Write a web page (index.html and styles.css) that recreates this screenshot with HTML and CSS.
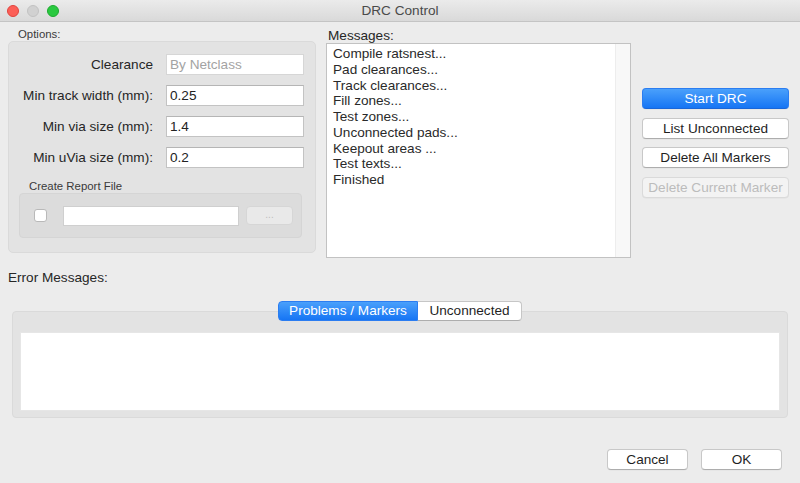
FILE: index.html
```html
<!DOCTYPE html>
<html>
<head>
<meta charset="utf-8">
<link rel="stylesheet" href="styles.css">
</head>
<body>
<div class="window">
  <div class="titlebar">
    <div class="lights">
      <span class="light red"></span>
      <span class="light gray"></span>
      <span class="light green"></span>
    </div>
    <div class="title">DRC Control</div>
    <div></div>
  </div>
  <div class="content">
    <div class="top">
      <div class="options">
        <div class="small-label opt-label">Options:</div>
        <div class="group">
          <div class="form">
            <div class="lbl">Clearance</div>
            <div class="field disabled">By Netclass</div>
            <div class="lbl">Min track width (mm):</div>
            <div class="field">0.25</div>
            <div class="lbl">Min via size (mm):</div>
            <div class="field">1.4</div>
            <div class="lbl">Min uVia size (mm):</div>
            <div class="field">0.2</div>
          </div>
          <div class="small-label report-label">Create Report File</div>
          <div class="subgroup">
            <span class="checkbox"></span>
            <div class="field report-field"></div>
            <div class="browse">...</div>
          </div>
        </div>
      </div>
      <div class="messages">
        <div class="msg-label">Messages:</div>
        <div class="listbox">
          <div class="lines">
            <div>Compile ratsnest...</div>
            <div>Pad clearances...</div>
            <div>Track clearances...</div>
            <div>Fill zones...</div>
            <div>Test zones...</div>
            <div>Unconnected pads...</div>
            <div>Keepout areas ...</div>
            <div>Test texts...</div>
            <div>Finished</div>
          </div>
          <div class="scrolltrack"></div>
        </div>
      </div>
      <div class="actions">
        <div class="btn primary">Start DRC</div>
        <div class="btn">List Unconnected</div>
        <div class="btn">Delete All Markers</div>
        <div class="btn disabled-btn">Delete Current Marker</div>
      </div>
    </div>
    <div class="err-label">Error Messages:</div>
    <div class="tabpanel">
      <div class="tabs">
        <div class="tab active">Problems / Markers</div>
        <div class="tab">Unconnected</div>
      </div>
      <div class="tabbox">
        <div class="tabcontent"></div>
      </div>
    </div>
    <div class="footer">
      <div class="btn footbtn">Cancel</div>
      <div class="btn footbtn">OK</div>
    </div>
  </div>
</div>
</body>
</html>
```

FILE: styles.css
```css
html, body {
  margin: 0;
  padding: 0;
  background: #ececec;
}
.window {
  width: 800px;
  height: 483px;
  overflow: hidden;
  background: #ececec;
  font-family: "Liberation Sans", Arial, sans-serif;
  font-size: 13.6px;
  color: #262626;
}
.titlebar {
  height: 21px;
  border-bottom: 1px solid #c4c4c4;
  background: linear-gradient(#ebebeb, #d9d9d9);
  display: grid;
  grid-template-columns: 1fr auto 1fr;
  align-items: center;
}
.lights {
  display: flex;
  gap: 8px;
  padding-left: 7px;
}
.light {
  width: 12px;
  height: 12px;
  border-radius: 50%;
  box-sizing: border-box;
}
.red { background: #fc5f57; border: 1px solid #e0443e; }
.gray { background: #d1d1d1; border: 1px solid #c2c2c2; }
.green { background: #2ac940; border: 1px solid #1eaa2f; }
.title {
  color: #4a4a4a;
  font-size: 13.6px;
}
.content {
  padding: 5px 11px 0 8px;
}
.top {
  display: flex;
  height: 231px;
}
.options {
  width: 308px;
}
.small-label {
  font-size: 11.4px;
  line-height: 14px;
  color: #3a3a3a;
}
.opt-label {
  padding-left: 10px;
}
.group {
  box-sizing: border-box;
  height: 212px;
  background: #e3e3e3;
  border: 1px solid #dadada;
  border-radius: 5px;
  padding: 12px 11px 0 0;
}
.form {
  display: grid;
  grid-template-columns: 144px 138px;
  column-gap: 13px;
  row-gap: 10px;
  align-items: center;
}
.lbl {
  text-align: right;
  line-height: 21px;
}
.field {
  box-sizing: border-box;
  height: 21px;
  background: #fff;
  border: 1px solid #c3c3c3;
  border-top-color: #b5b5b5;
  padding-left: 3px;
  line-height: 20px;
  color: #222;
}
.field.disabled {
  color: #a3a3a3;
  border-color: #d6d6d6;
}
.report-label {
  margin-top: 11px;
  padding-left: 20px;
}
.subgroup {
  box-sizing: border-box;
  margin-left: 10px;
  width: 283px;
  height: 45px;
  background: #dcdcdc;
  border: 1px solid #d5d5d5;
  border-radius: 4px;
  display: flex;
  align-items: center;
  padding-left: 14px;
}
.checkbox {
  box-sizing: border-box;
  width: 13px;
  height: 13px;
  background: #fff;
  border: 1px solid #b9b9b9;
  border-radius: 3px;
  margin-right: 16px;
}
.report-field {
  width: 176px;
  height: 20px;
  border-color: #cfcfcf;
}
.browse {
  box-sizing: border-box;
  margin-left: 7px;
  width: 47px;
  height: 19px;
  background: #e9e9e9;
  border: 1px solid #d6d6d6;
  border-radius: 4px;
  color: #bdbdbd;
  font-size: 10px;
  text-align: center;
  line-height: 15px;
}
.messages {
  width: 305px;
  margin-left: 10px;
}
.msg-label {
  margin-top: 1px;
  padding-left: 2px;
  line-height: 15px;
  color: #262626;
}
.listbox {
  box-sizing: border-box;
  height: 215px;
  background: #fff;
  border: 1px solid #c2c2c2;
  display: flex;
}
.lines {
  flex: 1;
  padding: 2px 0 0 6px;
  line-height: 15.75px;
  color: #2a2a2a;
}
.scrolltrack {
  width: 14px;
  background: #f8f8f8;
  border-left: 1px solid #ededed;
}
.actions {
  width: 147px;
  margin-left: 11px;
  padding-top: 61px;
  display: flex;
  flex-direction: column;
  gap: 8.5px;
}
.btn {
  box-sizing: border-box;
  height: 21px;
  background: #fff;
  border: 1px solid #c8c8c8;
  border-bottom-color: #adadad;
  border-radius: 4px;
  text-align: center;
  line-height: 19px;
  color: #1f1f1f;
  box-shadow: 0 0.5px 0 rgba(0,0,0,0.05);
}
.btn.primary {
  background: linear-gradient(#4aa0fb, #1675f4);
  border-color: #2b7df1;
  border-bottom-color: #1a66d8;
  color: #fff;
}
.btn.disabled-btn {
  background: #f3f3f3;
  border-color: #dadada;
  color: #bcbcbc;
}
.err-label {
  margin-top: 12px;
  line-height: 16px;
  color: #262626;
}
.tabpanel {
  margin: 15px 1px 0 4px;
}
.tabs {
  display: flex;
  justify-content: center;
  margin-bottom: -10px;
  position: relative;
  z-index: 1;
}
.tab {
  box-sizing: border-box;
  height: 20px;
  line-height: 18px;
  background: #fff;
  border: 1px solid #c6c6c6;
  border-bottom-color: #adadad;
  color: #1f1f1f;
  text-align: center;
}
.tab.active {
  width: 140px;
  background: linear-gradient(#4aa0fb, #1675f4);
  border-color: #2b7df1;
  color: #fff;
  border-radius: 4px 0 0 4px;
}
.tab:last-child {
  width: 104px;
  border-left: none;
  border-radius: 0 4px 4px 0;
}
.tabbox {
  box-sizing: border-box;
  height: 107px;
  background: #e3e3e3;
  border: 1px solid #dadada;
  border-radius: 4px;
  padding: 20px 7px 6px 7px;
}
.tabcontent {
  height: 100%;
  background: #fff;
  border: 1px solid #e6e6e6;
  box-sizing: border-box;
}
.footer {
  margin-top: 31px;
  display: flex;
  justify-content: flex-end;
  gap: 13px;
  padding-right: 7px;
}
.footbtn {
  width: 81px;
}
```
